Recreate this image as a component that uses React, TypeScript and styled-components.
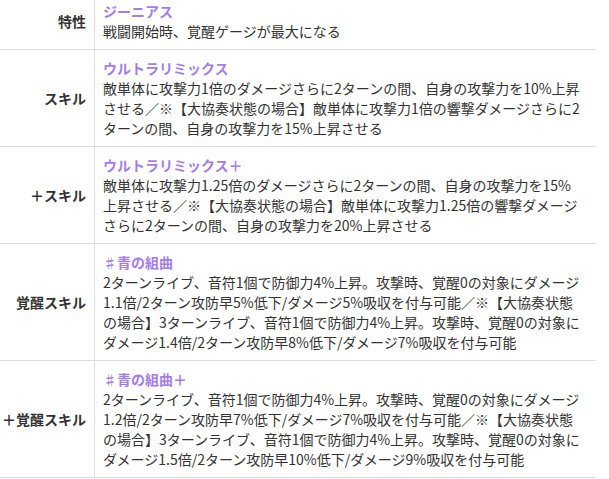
import React, { FC } from "react";
import styled, { createGlobalStyle } from "styled-components";

const GlobalStyle = createGlobalStyle`
    html, body {
        margin: 0;
        padding: 0;
        background: #ffffff;
    }
    body {
        font-family: "Noto Sans CJK JP", "Noto Sans", sans-serif;
        color: #333333;
        overflow: hidden;
    }
`;

const Page = styled.div`
    width: 596px;
    margin-top: -7px;
`;

const Table = styled.table`
    width: 596px;
    border-collapse: collapse;
    table-layout: fixed;
`;

const Row = styled.tr`
    border-bottom: 1px solid #dddddd;
`;

const HeadCell = styled.th`
    width: 86px;
    padding: 8px 8px 8px 0;
    border-right: 1px solid #dddddd;
    text-align: right;
    vertical-align: middle;
    font-size: 14px;
    font-weight: 700;
    line-height: 20px;
    color: #333333;
    white-space: nowrap;
`;

const BodyCell = styled.td`
    padding: 8px 8px 8px 8px;
    vertical-align: top;
    font-size: 14px;
    line-height: 20px;
    color: #333333;
`;

const SkillName = styled.div`
    font-weight: 700;
    color: #a47ee8;
`;

// 参照どおりの改行位置で行を分ける
const SkillLine = styled.div`
    font-weight: 400;
    white-space: nowrap;
`;

interface SkillRow {
    label: string;
    name: string;
    lines: string[];
}

const rows: SkillRow[] = [
    {
        label: "特性",
        name: "ジーニアス",
        lines: ["戦闘開始時、覚醒ゲージが最大になる"],
    },
    {
        label: "スキル",
        name: "ウルトラリミックス",
        lines: [
            "敵単体に攻撃力1倍のダメージさらに2ターンの間、自身の攻撃力を10%上昇",
            "させる／※【大協奏状態の場合】敵単体に攻撃力1倍の響撃ダメージさらに2",
            "ターンの間、自身の攻撃力を15%上昇させる",
        ],
    },
    {
        label: "＋スキル",
        name: "ウルトラリミックス＋",
        lines: [
            "敵単体に攻撃力1.25倍のダメージさらに2ターンの間、自身の攻撃力を15%",
            "上昇させる／※【大協奏状態の場合】敵単体に攻撃力1.25倍の響撃ダメージ",
            "さらに2ターンの間、自身の攻撃力を20%上昇させる",
        ],
    },
    {
        label: "覚醒スキル",
        name: "♯青の組曲",
        lines: [
            "2ターンライブ、音符1個で防御力4%上昇。攻撃時、覚醒0の対象にダメージ",
            "1.1倍/2ターン攻防早5%低下/ダメージ5%吸収を付与可能／※【大協奏状態",
            "の場合】3ターンライブ、音符1個で防御力4%上昇。攻撃時、覚醒0の対象に",
            "ダメージ1.4倍/2ターン攻防早8%低下/ダメージ7%吸収を付与可能",
        ],
    },
    {
        label: "＋覚醒スキル",
        name: "♯青の組曲＋",
        lines: [
            "2ターンライブ、音符1個で防御力4%上昇。攻撃時、覚醒0の対象にダメージ",
            "1.2倍/2ターン攻防早7%低下/ダメージ7%吸収を付与可能／※【大協奏状態",
            "の場合】3ターンライブ、音符1個で防御力4%上昇。攻撃時、覚醒0の対象に",
            "ダメージ1.5倍/2ターン攻防早10%低下/ダメージ9%吸収を付与可能",
        ],
    },
];

const App: FC = () => {
    return (
        <>
            <GlobalStyle />
            <Page>
                <Table>
                    <tbody>
                        {rows.map((row, index) => (
                            <Row key={index}>
                                <HeadCell>{row.label}</HeadCell>
                                <BodyCell>
                                    <SkillName>{row.name}</SkillName>
                                    {row.lines.map((line, lineIndex) => (
                                        <SkillLine key={lineIndex}>{line}</SkillLine>
                                    ))}
                                </BodyCell>
                            </Row>
                        ))}
                    </tbody>
                </Table>
            </Page>
        </>
    );
};

export default App;
